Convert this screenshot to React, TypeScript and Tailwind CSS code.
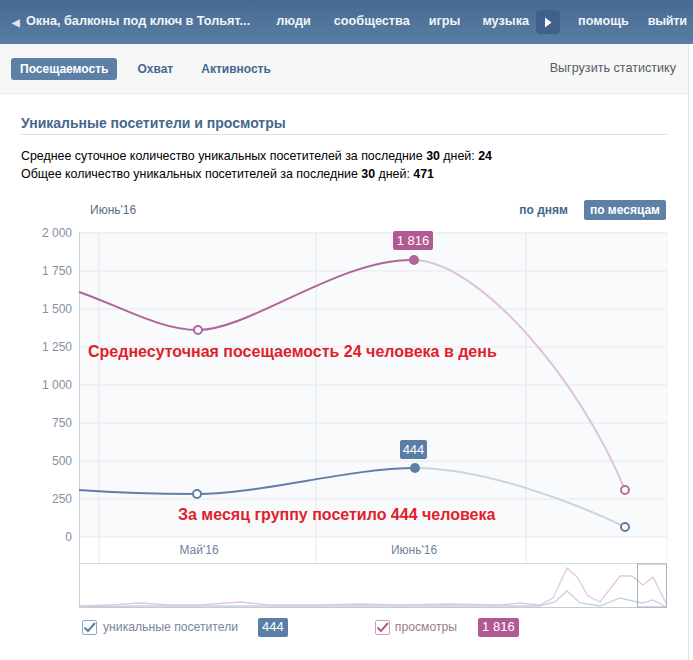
import React from "react";

const font = "font-['Liberation_Sans',Arial,sans-serif]";

const yLabels = ["2 000", "1 750", "1 500", "1 250", "1 000", "750", "500", "250", "0"];

function Header() {
  return (
    <div className="flex h-[44px] items-center whitespace-nowrap bg-gradient-to-b from-[#476a92] to-[#5a7da4] text-[12.7px] font-bold text-[#f1f4f8]">
      <span className="ml-[12px] text-[10px] text-[#dfe6ee]">◀</span>
      <span className="ml-[6px]">Окна, балконы под ключ в Тольят...</span>
      <span className="ml-[26px]">люди</span>
      <span className="ml-[23px]">сообщества</span>
      <span className="ml-[19px]">игры</span>
      <span className="ml-[22px]">музыка</span>
      <span className="ml-[7px] flex h-[24px] w-[24px] items-center justify-center rounded-sm bg-[#3f6189]">
        <svg width="8" height="11" viewBox="0 0 8 11">
          <path d="M1 0.5 L7.5 5.5 L1 10.5 Z" fill="#ffffff" />
        </svg>
      </span>
      <span className="ml-[18px]">помощь</span>
      <span className="ml-[19px] tracking-[-0.3px]">выйти</span>
    </div>
  );
}

function Tabs() {
  return (
    <div className="flex h-[50px] items-center border-b border-[#e4e7eb] bg-[#f7f7f7] pl-[11px] pr-[12px] text-[12px]">
      <span className="flex h-[22px] items-center rounded-[3px] bg-[#5d80a7] px-[9px] font-bold text-white">
        Посещаемость
      </span>
      <span className="ml-[20px] font-bold text-[#45688e]">Охват</span>
      <span className="ml-[28px] font-bold text-[#45688e]">Активность</span>
      <span className="ml-auto text-[12.6px] text-[#555d66]">Выгрузить статистику</span>
    </div>
  );
}

function Chart() {
  const grid = [233, 271, 309, 347, 385, 423, 461, 499, 537];
  return (
    <div className="relative h-[392px]">
      <svg width="689" height="392" viewBox="0 220 689 392" className="block">
        <rect x="79" y="232" width="588" height="305" fill="#f9fafc" />
        {grid.map((y) => (
          <line key={y} x1="79" x2="667" y1={y} y2={y} stroke="#e6e9ee" strokeWidth="1" />
        ))}
        {[99, 316, 526].map((x) => (
          <line key={x} x1={x} x2={x} y1="232" y2="563" stroke="#e3e7ec" strokeWidth="1" />
        ))}
        <line x1="667" x2="667" y1="232" y2="563" stroke="#eef0f3" strokeWidth="1" />
        <line x1="79.5" x2="79.5" y1="232" y2="608" stroke="#c9d1db" strokeWidth="1" />
        <line x1="79" x2="667" y1="563.5" y2="563.5" stroke="#d6dce3" strokeWidth="1" />
        <line x1="79" x2="667" y1="607.5" y2="607.5" stroke="#c3cbd5" strokeWidth="1" />

        {yLabels.map((l, i) => (
          <text key={l} x="72" y={grid[i] + 4} textAnchor="end" fontSize="12" fill="#8191a6" fontFamily="Liberation Sans, Arial, sans-serif">
            {l}
          </text>
        ))}
        <text x="199" y="554" textAnchor="middle" fontSize="12" fill="#6f83a0" fontFamily="Liberation Sans, Arial, sans-serif">
          Май'16
        </text>
        <text x="414" y="554" textAnchor="middle" fontSize="12" fill="#6f83a0" fontFamily="Liberation Sans, Arial, sans-serif">
          Июнь'16
        </text>

        {/* просмотры */}
        <path d="M79,292 C120,306 160,330 198,330 C250,330 340,258 414,260" fill="none" stroke="#b0649a" strokeWidth="2" />
        <path d="M414,260 C480,262 580,380 625,490" fill="none" stroke="#dec4d5" strokeWidth="2" />
        {/* уникальные посетители */}
        <path d="M79,490 C120,493 160,494 197,494 C260,494 350,468 415,468" fill="none" stroke="#5f80a6" strokeWidth="2" />
        <path d="M415,468 C480,468 570,500 625,527" fill="none" stroke="#c9d5e2" strokeWidth="2" />

        <circle cx="198" cy="330" r="4" fill="#fff" stroke="#b0649a" strokeWidth="2" />
        <circle cx="625" cy="490" r="4" fill="#fff" stroke="#b66f9c" strokeWidth="2" />
        <circle cx="414" cy="260" r="5" fill="#b0649a" />
        <circle cx="197" cy="494" r="4" fill="#fff" stroke="#5f80a6" strokeWidth="2" />
        <circle cx="625" cy="527" r="4" fill="#fff" stroke="#5f7d9c" strokeWidth="2" />
        <circle cx="415" cy="468" r="5" fill="#5f80a6" />

        <rect x="393" y="231" width="40" height="19" rx="2" fill="#b05a91" />
        <text x="413" y="245" textAnchor="middle" fontSize="13" fill="#fff" fontFamily="Liberation Sans, Arial, sans-serif">
          1 816
        </text>
        <rect x="400" y="440" width="27" height="19" rx="2" fill="#5a7da5" />
        <text x="413.5" y="454" textAnchor="middle" fontSize="13" fill="#fff" fontFamily="Liberation Sans, Arial, sans-serif">
          444
        </text>

        {/* навигатор */}
        <polyline
          points="80,606 110,605 140,603 170,605 200,605 240,602 270,605 320,605 360,604 400,605 450,604 500,605 520,603 540,605 553,598 567,568 577,577 588,596 600,602 620,576 632,576 643,585 653,577 666,603"
          fill="none"
          stroke="#e2c8d8"
          strokeWidth="1.3"
        />
        <polyline
          points="80,607 140,606 200,606 260,606 330,606 400,606 460,606 520,606 540,606 555,602 567,591 580,603 600,606 620,598 637,602 643,603 653,600 666,607"
          fill="none"
          stroke="#c6d1dd"
          strokeWidth="1.3"
        />
        <rect x="637.5" y="564" width="29" height="43" fill="none" stroke="#a3b0bf" strokeWidth="1" />
      </svg>

      <div className="absolute left-[88px] top-[122px] whitespace-nowrap text-[16px] font-bold leading-[20px] text-[#e01f2b]">
        Среднесуточная посещаемость 24 человека в день
      </div>
      <div className="absolute left-[178px] top-[285px] whitespace-nowrap text-[16px] font-bold leading-[20px] text-[#e01f2b]">
        За месяц группу посетило 444 человека
      </div>
    </div>
  );
}

function Check({ border, color }: { border: string; color: string }) {
  return (
    <span className={`flex h-[15px] w-[15px] items-center justify-center rounded-[2px] border ${border} bg-white`}>
      <svg width="13" height="11" viewBox="0 0 13 11">
        <path d="M1.5 5.5 L5 9 L12 1" fill="none" stroke={color} strokeWidth="2" />
      </svg>
    </span>
  );
}

function Legend() {
  return (
    <div className="flex h-[30px] items-center text-[12.2px]">
      <span className="ml-[82px]">
        <Check border="border-[#93a8bf]" color="#5b7fa6" />
      </span>
      <span className="ml-[6px] text-[#7b8797]">уникальные посетители</span>
      <span className="ml-[20px] flex h-[19px] items-center rounded-[2px] bg-[#5b7ea6] px-[4px] text-[13px] text-white">444</span>
      <span className="ml-[87px]">
        <Check border="border-[#cd9dbb]" color="#b05e92" />
      </span>
      <span className="ml-[5px] text-[#9a7d90]">просмотры</span>
      <span className="ml-[21px] flex h-[19px] items-center rounded-[2px] bg-[#b05a91] px-[4px] text-[13px] text-white">1 816</span>
    </div>
  );
}

export default function App() {
  return (
    <div className={`h-[660px] w-[693px] overflow-hidden bg-white ${font}`}>
      <Header />
      <div className="w-[689px] border-r border-[#dfe3e8]">
        <Tabs />
        <div className="pb-[20px]">
          <div className="mx-[21px] mt-[21px] border-b border-[#dde2e8] pb-[3px] text-[14px] font-bold leading-[16px] text-[#45688e]">
            Уникальные посетители и просмотры
          </div>
          <div className="ml-[21px] mt-[12px] text-[12.4px] leading-[18px] text-black">
            <p>
              Среднее суточное количество уникальных посетителей за последние <b>30</b> дней: <b>24</b>
            </p>
            <p>
              Общее количество уникальных посетителей за последние <b>30</b> дней: <b>471</b>
            </p>
          </div>
          <div className="mt-[17px] flex h-[20px] items-center pl-[90px] pr-[22px] text-[12px]">
            <span className="text-[#5a6e8b]">Июнь'16</span>
            <span className="ml-auto font-bold text-[#45688e]">по дням</span>
            <span className="ml-[16px] flex h-[20px] items-center rounded-[2px] bg-[#5d80a7] px-[6px] font-bold text-white">
              по месяцам
            </span>
          </div>
          <Chart />
          <Legend />
        </div>
      </div>
    </div>
  );
}
